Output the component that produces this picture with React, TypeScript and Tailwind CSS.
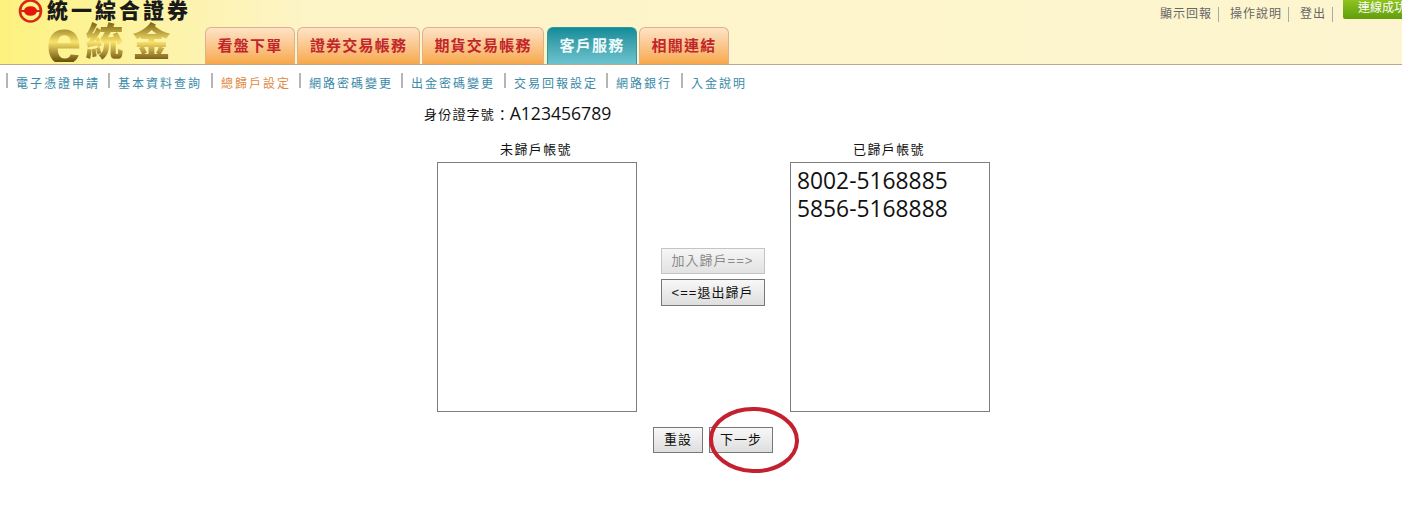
const cjk = "font-['Liberation_Sans','Noto_Sans_CJK_TC',sans-serif]";

const tabs = [
  { label: "看盤下單", w: "w-[90px]", active: false },
  { label: "證券交易帳務", w: "w-[123px]", active: false },
  { label: "期貨交易帳務", w: "w-[122px]", active: false },
  { label: "客戶服務", w: "w-[90px] ml-[1px]", active: true },
  { label: "相關連結", w: "w-[90px]", active: false },
];

const subs = [
  { label: "電子憑證申請", w: "w-[102px]" },
  { label: "基本資料查詢", w: "w-[103px]" },
  { label: "總歸戶設定", w: "w-[88px]", on: true },
  { label: "網路密碼變更", w: "w-[102px]" },
  { label: "出金密碼變更", w: "w-[103px]" },
  { label: "交易回報設定", w: "w-[102px]" },
  { label: "網路銀行", w: "w-[75px]" },
  { label: "入金說明", w: "w-[75px]" },
];

function Btn({ children, disabled, className }: { children: React.ReactNode; disabled?: boolean; className: string }) {
  return (
    <div
      className={
        "flex items-center justify-center border text-[13px] tracking-[1px] bg-gradient-to-b " +
        (disabled
          ? "border-[#c4c4c4] from-[#f6f6f6] to-[#e2e2e2] text-[#8a8a8a] "
          : "border-[#777777] from-[#f8f8f8] to-[#dedede] text-[#111111] ") +
        className
      }
    >
      {children}
    </div>
  );
}

function ListBox({ title, items }: { title: string; items: string[] }) {
  return (
    <div className="flex w-[200px] flex-col items-center">
      <div className="h-[25px] pr-[2px] pt-[4px] text-[13px] leading-[18px] tracking-[1.4px] text-[#111111]">{title}</div>
      <div className="h-[250px] w-[200px] border border-[#7d7d7d] bg-white px-[6px] pt-[4px] font-['Open_Sans',sans-serif] text-[22.8px] leading-[28px] text-[#111111]">
        {items.map((i) => (
          <div key={i}>{i}</div>
        ))}
      </div>
    </div>
  );
}

export default function App() {
  return (
    <div className={"relative h-[511px] w-[1402px] overflow-hidden bg-white " + cjk}>
      <header className="relative flex h-[65px] border-b border-[#bda98a] bg-gradient-to-r from-[#fdf27e] via-[#fdf4c8] via-[22%] to-[#fdf5cf]">
        <div className="w-[205px] shrink-0 pl-[18px]">
          <div className="flex h-[22px] items-center">
            <svg width="25" height="25" viewBox="0 0 25 25" className="shrink-0">
              <circle cx="12.5" cy="12" r="10.5" fill="none" stroke="#d42a1c" strokeWidth="2.6" />
              <path d="M3 12h19" stroke="#d42a1c" strokeWidth="2" />
              <ellipse cx="12.5" cy="12" rx="6.5" ry="4.8" fill="#e3170d" />
            </svg>
            <span className="ml-[4px] whitespace-nowrap text-[21px] font-black leading-[20px] tracking-[3px] text-[#1a1a1a]">
              統一綜合證券
            </span>
          </div>
          <div className="flex h-[40px] items-center pl-[28px]">
            <span className="bg-gradient-to-b from-[#7a6410] via-[#fbe36a] to-[#6a4f08] bg-clip-text text-[64px] font-bold leading-[40px] text-transparent">
              e
            </span>
            <span className="ml-[4px] whitespace-nowrap bg-gradient-to-b from-[#7a6410] via-[#fbe36a] to-[#6a4f08] bg-clip-text text-[38px] font-black leading-[40px] tracking-[9px] text-transparent">
              統金
            </span>
          </div>
        </div>
        <nav className="flex items-end gap-[2px] self-end">
          {tabs.map((t) => (
            <div
              key={t.label}
              className={
                "flex h-[37px] items-center justify-center rounded-t-[6px] border border-b-0 text-[15px] font-bold tracking-[1.2px] " +
                t.w +
                " " +
                (t.active
                  ? "border-[#2d98a3] bg-gradient-to-b from-[#0e8c99] to-[#6cc4cf] text-[#eefafa]"
                  : "border-[#dcb18c] bg-gradient-to-b from-[#fde3c5] to-[#f7a848] text-[#c0272d]")
              }
            >
              {t.label}
            </div>
          ))}
        </nav>
        <div className="absolute right-0 top-0 flex items-start">
          <div className="mr-[10px] flex pt-[7px] text-[12px] leading-[15px] tracking-[1px] text-[#666666]">
            <span className="border-r border-[#a9a9a9] pr-[6px]">顯示回報</span>
            <span className="ml-[11px] border-r border-[#a9a9a9] pr-[6px]">操作說明</span>
            <span className="ml-[11px] border-r border-[#a9a9a9] pr-[6px]">登出</span>
          </div>
          <div className="h-[19px] w-[59px] overflow-hidden whitespace-nowrap rounded-bl-[2px] bg-gradient-to-b from-[#8fc31f] to-[#5f9e0c] pl-[15px] text-[12px] leading-[17px] text-white">
            連線成功
          </div>
        </div>
      </header>

      <div className="flex pl-[6px] pt-[8px]">
        {subs.map((s) => (
          <div key={s.label} className={"flex h-[20px] " + s.w}>
            <span className="h-[15px] w-[2px] bg-[#b5b5b5]" />
            <span
              className={
                "ml-[8px] whitespace-nowrap pt-[3px] text-[12px] leading-[17px] tracking-[2px] " +
                (s.on ? "text-[#e08a45]" : "text-[#3a8aa8]")
              }
            >
              {s.label}
            </span>
          </div>
        ))}
      </div>

      <div className="ml-[424px] mt-[9px] flex h-[24px] items-center">
        <span className="pt-[2px] text-[13px] tracking-[1.2px] text-[#111111]">身份證字號</span>
        <span className="ml-[5px] mt-[-2px] font-['Open_Sans',sans-serif] text-[17.6px] text-[#111111]">:</span>
        <span className="ml-[5px] mt-[-2px] font-['Open_Sans',sans-serif] text-[17.6px] text-[#111111]">A123456789</span>
      </div>

      <main className="ml-[437px] mt-[11px] w-[553px]">
        <div className="flex justify-between">
          <ListBox title="未歸戶帳號" items={[]} />
          <div className="ml-[-2px] flex flex-col items-center pt-[111px]">
            <Btn disabled className="h-[26px] w-[104px]">加入歸戶==&gt;</Btn>
            <Btn className="mt-[5px] h-[27px] w-[104px]">&lt;==退出歸戶</Btn>
          </div>
          <ListBox title="已歸戶帳號" items={["8002-5168885", "5856-5168888"]} />
        </div>
        <div className="mt-[15px] flex pl-[216px]">
          <Btn className="h-[26px] w-[50px]">重設</Btn>
          <Btn className="ml-[6px] h-[26px] w-[64px]">下一步</Btn>
        </div>
      </main>

      <svg className="pointer-events-none absolute left-[704px] top-[401px]" width="100" height="76" viewBox="0 0 100 76">
        <ellipse cx="50" cy="39" rx="43" ry="31" fill="none" stroke="#c5202f" strokeWidth="4" transform="rotate(2 50 39)" />
      </svg>
    </div>
  );
}
